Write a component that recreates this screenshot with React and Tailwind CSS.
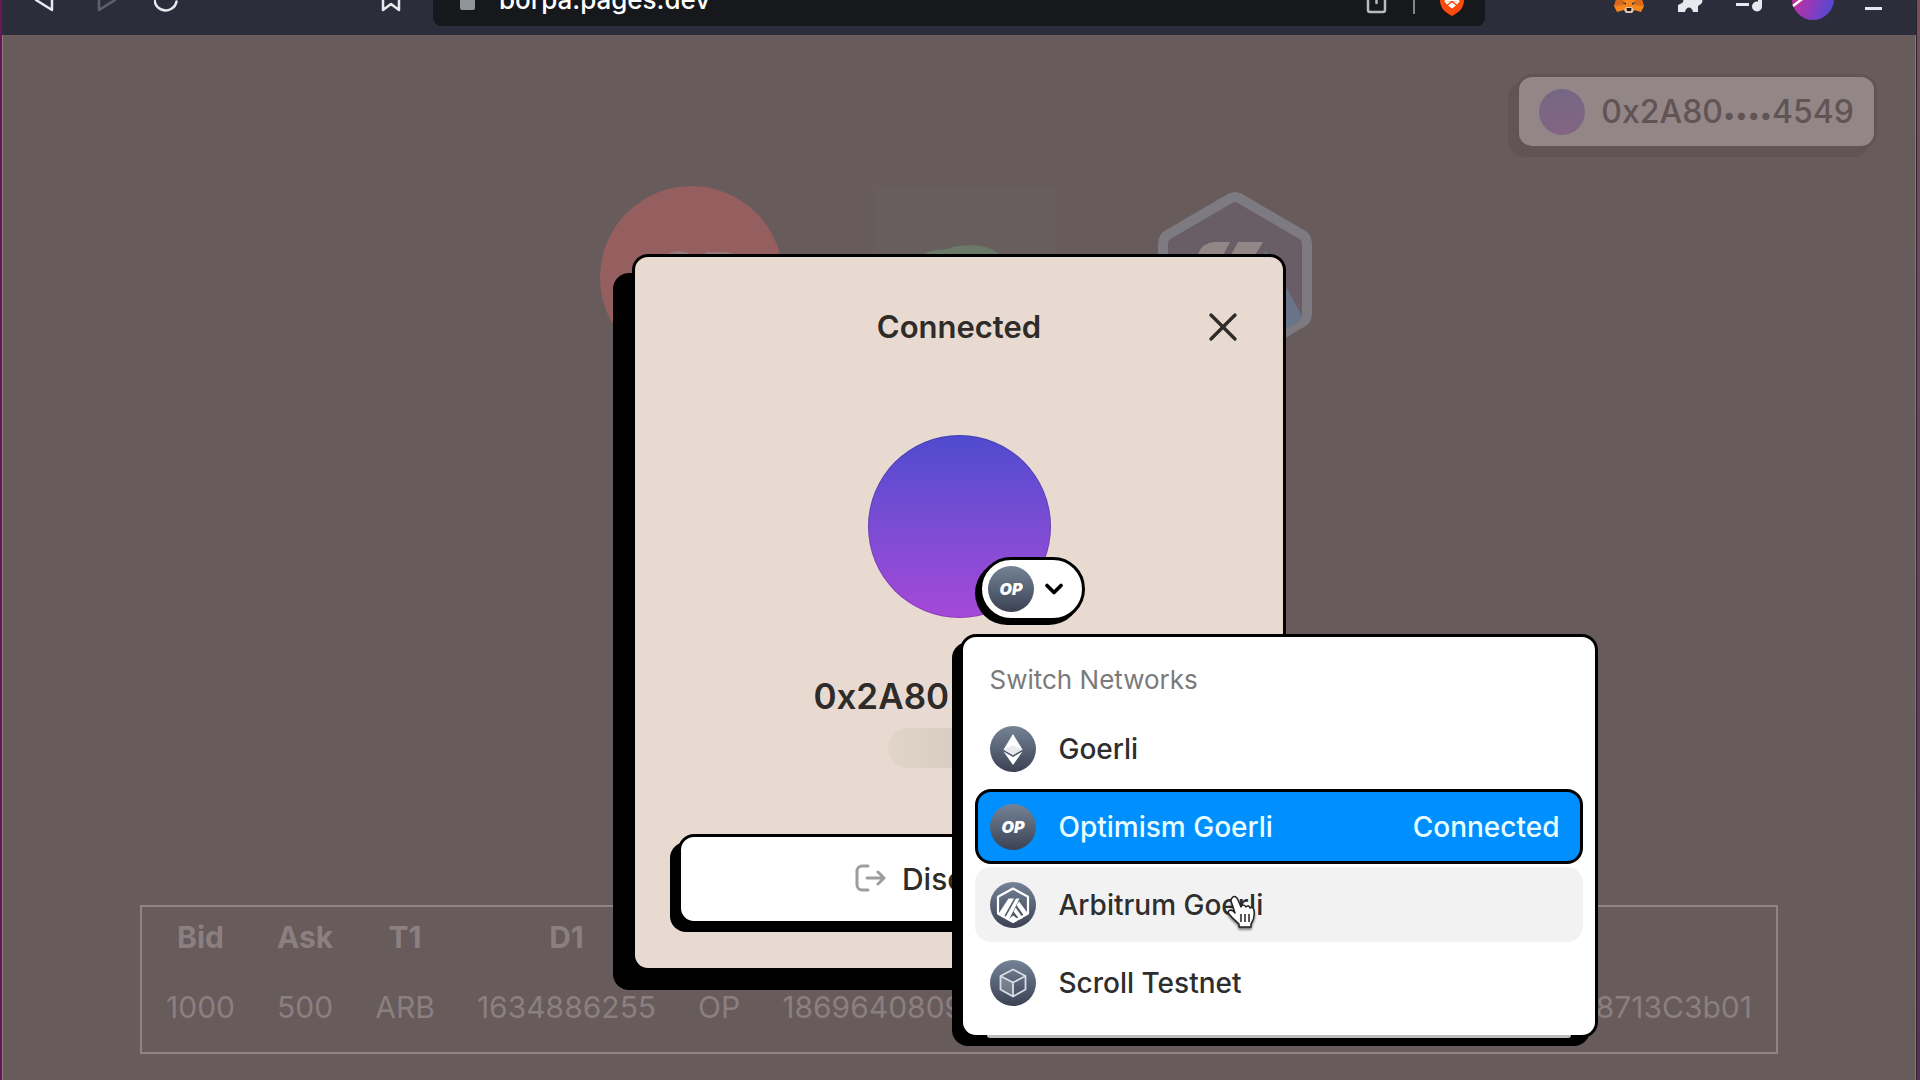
import React from 'react';
import { X, ChevronDown } from 'lucide-react';

const orders = [
  {
    bid: '1000',
    ask: '500',
    t1: 'ARB',
    d1: '1634886255',
    t2: 'OP',
    d2: '1869640809',
    address: '0x2A80b4f19d6ce07a35f81b124dc16a08713C3b01',
  },
];

const ChainBadge = ({ id, children }) => (
  <svg className="size-[46px] shrink-0" viewBox="0 0 46 46" aria-hidden="true">
    <defs>
      <linearGradient id={id} x1="0" y1="0" x2="0" y2="1">
        <stop offset="0" stopColor="#758396" />
        <stop offset="1" stopColor="#3b4254" />
      </linearGradient>
    </defs>
    <circle cx="23" cy="23" r="23" fill={`url(#${id})`} />
    {children}
  </svg>
);

const GoerliIcon = () => (
  <ChainBadge id="goerli">
    <path d="M23 8l9.500 15.500L23 29l-9.500-5.500z" fill="#fff" />
    <path d="M13.500 25.500L23 31l9.500-5.500L23 39z" fill="#fff" />
    <path d="M13.500 23.500L23 19.500l9.500 4L23 29z" fill="#e8eaf0" />
  </ChainBadge>
);

const OptimismIcon = ({ id }) => (
  <ChainBadge id={id}>
    <text
      x="23"
      y="29"
      textAnchor="middle"
      fill="#fff"
      className="font-['Inter'] text-[16px] font-black italic"
    >
      OP
    </text>
  </ChainBadge>
);

const ArbitrumIcon = () => (
  <ChainBadge id="arbitrum">
    <path d="M23 6.500L38 14.800V31.500L23 40L8 31.500V14.800z" fill="none" stroke="#fff" strokeWidth="2.200" strokeLinejoin="round" />
    <path d="M18.500 16.500H24L13.500 35.500L8 32.500z" fill="#fff" />
    <path d="M26 16.500H29.500L19 37.500L15 36z" fill="#fff" />
    <path d="M29 19.500L38 31.500L34.500 34.500L26.500 23z" fill="#fff" />
    <path d="M25.500 25.500L33 36L29.500 37.500L23.500 29.500z" fill="#fff" />
    <path d="M19 37L23 33.500L28 37L23 40z" fill="#fff" />
  </ChainBadge>
);

const ScrollIcon = () => (
  <ChainBadge id="scroll">
    <path d="M10.500 16L23 23V36.500L10.500 29.500z" fill="#fff" fillOpacity=".2" />
    <path
      d="M23 9.500L35.500 16V29.500L23 36.500L10.500 29.500V16zM10.500 16L23 22.500L35.500 16M23 22.500V36.500"
      fill="none"
      stroke="#d9dde6"
      strokeWidth="1.800"
      strokeLinejoin="round"
    />
  </ChainBadge>
);

const BrowserBar = () => (
  <header className="flex h-[35px] items-end overflow-hidden bg-[#2b2d3a]">
    {/* only the lower half of the toolbar is in view */}
    <div className="flex h-[70px] w-full shrink-0 items-center">
      <div className="flex flex-1 items-center">
        <button aria-label="Back" className="ml-[30px]">
          <svg className="size-6" viewBox="0 0 24 24" fill="none" stroke="#e8e9ee" strokeWidth="2.500" strokeLinejoin="round">
            <path d="M20 2V22L4 12z" />
          </svg>
        </button>
        <button aria-label="Forward" className="ml-[38px]">
          <svg className="size-6" viewBox="0 0 24 24" fill="none" stroke="#5f616c" strokeWidth="2.500" strokeLinejoin="round">
            <path d="M5 2V22L21 12z" />
          </svg>
        </button>
        <button aria-label="Reload" className="ml-9">
          <svg className="size-6" viewBox="0 0 24 24" fill="none" stroke="#e8e9ee" strokeWidth="2.500" strokeLinecap="round">
            <path d="M22.500 13.500A11 10.500 0 1 1 20 5" />
          </svg>
        </button>
        <button aria-label="Bookmark" className="ml-[201px]">
          <svg className="size-6" viewBox="0 0 24 24" fill="none" stroke="#e8e9ee" strokeWidth="2.500" strokeLinejoin="round">
            <path d="M4 1H20V22L12 16L4 22z" />
          </svg>
        </button>
        <div className="ml-[30px] flex h-[51px] flex-1 items-center rounded-lg bg-[#17181c] pl-[27px] pr-5">
          <svg className="h-[22px] w-[15px]" viewBox="0 0 15 22" aria-hidden="true">
            <path d="M3 9V5a4.500 4.500 0 0 1 9 0v4" fill="none" stroke="#8f9499" strokeWidth="2" />
            <rect y="8" width="15" height="13" rx="2" fill="#8f9499" />
          </svg>
          <span className="ml-6 flex-1 text-[26px] font-medium leading-8 text-white">borpa.pages.dev</span>
          <button aria-label="Share">
            <svg className="h-7 w-6" viewBox="0 0 24 28" fill="none" stroke="#b9bac0" strokeWidth="2.500" strokeLinecap="round">
              <path d="M8 7H5a2 2 0 0 0-2 2V24a2 2 0 0 0 2 2H18a2 2 0 0 0 2-2V9a2 2 0 0 0-2-2h-3M11.500 2V17" />
            </svg>
          </button>
          <span className="ml-6 h-7 w-[2px] bg-[#85868c]" />
          <button aria-label="Brave Shields" className="ml-6">
            <svg className="h-8 w-[26px]" viewBox="0 0 26 32">
              <path d="M5 2H21L26 9L25 17C24 24 22 27 13 32C4 27 2 24 1 17L0 9z" fill="#fb4a0b" />
              <path d="M5 9L13 7L21 9L19 15L21 18L14 17H12L5 18L7 15z" fill="#fff" />
              <path d="M12 17.500L8 20.500L5.500 17.500zM14 17.500L18 20.500L20.500 17.500zM13 18.500L17 21.500L13 24.500L9 21.500z" fill="#fff" />
            </svg>
          </button>
        </div>
      </div>
      <div className="ml-[129px] mr-[34px] flex items-center">
        <button aria-label="MetaMask">
          <svg className="h-7 w-[30px]" viewBox="0 0 30 28">
            <path d="M1 1L12 8H18L29 1L28 14L30 20L27 26L20 24L18 27H12L10 24L3 26L0 20L2 14z" fill="#f6851b" />
            <path d="M2 14L9 13L10 19L0 20zM28 14L21 13L20 19L30 20z" fill="#d9691c" />
            <path d="M10 24L12 21H18L20 24L18 27H12z" fill="#d8c3b4" />
            <path d="M12.500 22H17.500L17 25H13z" fill="#161616" />
            <path d="M8 16L12 17L12 19zM22 16L18 17L18 19z" fill="#233447" />
          </svg>
        </button>
        <button aria-label="Extensions" className="ml-8">
          <svg className="size-7" viewBox="0 0 28 28" fill="#e8e9ee">
            <path d="M6 5H11A4 4 0 0 1 18 5H23V11A4 4 0 0 1 25 18L22 20V26H17C16 20 10 20 9 26H2V19L6 17A3 3 0 0 0 6 12z" />
          </svg>
        </button>
        <button aria-label="Media controls" className="ml-8">
          <svg className="h-6 w-[27px]" viewBox="0 0 27 24" fill="#e8e9ee">
            <path d="M0 7H16V10H0zM0 15H13V18H0zM22 2H27V5H26V19H22z" />
            <circle cx="21" cy="18.500" r="5" />
          </svg>
        </button>
        <button aria-label="Profile" className="ml-[29px]">
          <svg className="size-[42px]" viewBox="0 0 42 42">
            <defs>
              <linearGradient id="profile" x1="0" y1="0.400" x2="1" y2="0.800">
                <stop offset="0.100" stopColor="#c32fa4" />
                <stop offset="1" stopColor="#4b4bd6" />
              </linearGradient>
            </defs>
            <circle cx="21" cy="20" r="21" fill="url(#profile)" />
            <path d="M1 27L14 17" stroke="#fff" strokeWidth="2.500" />
          </svg>
        </button>
        <button aria-label="Minimize" className="ml-[31px]">
          <svg className="h-6 w-[17px]" viewBox="0 0 17 24">
            <path d="M0 19H17V22H0z" fill="#e8e9ee" />
          </svg>
        </button>
      </div>
    </div>
  </header>
);

const TokenLogos = () => (
  <div className="mt-[37px] flex justify-center gap-[91px] pl-[13px]">
    <svg className="size-[183px]" viewBox="0 0 183 183" aria-hidden="true">
      <circle cx="91.500" cy="91.500" r="91.500" fill="#965f5f" />
      <text x="95" y="110" textAnchor="middle" fill="#94787a" className="font-['Inter'] text-[60px] font-black italic">OP</text>
    </svg>
    <svg className="size-[183px] bg-[#685e5e]" viewBox="0 0 183 183" aria-hidden="true">
      <path d="M50 69C56 62 68 65 76 62C88 58 110 58 120 65C124 67 127 71 128 73L130 120H44z" fill="#6a7a66" />
    </svg>
    <svg className="size-[183px]" viewBox="0 0 183 183" aria-hidden="true">
      <path
        d="M83 12Q87 10 91 12L153 48Q159 51 159 58V128Q159 134 153 137L91 173Q87 175 83 173L21 137Q15 134 15 128V58Q15 51 21 48z"
        fill="#695e66"
        stroke="#7d7a81"
        strokeWidth="10"
      />
      <path d="M118 65L154 130Q154 135 140 142L90 100z" fill="#6a7489" />
      <path d="M66 56H82L50 118H36L50 68Q54 57 66 56zM90 56H115L70 130H50z" fill="#938687" />
    </svg>
  </div>
);

const OrdersTable = () => (
  <div className="px-[137px]">
    <table className="w-full border-separate border-spacing-x-1 border-spacing-y-0 whitespace-nowrap border-2 border-[#8f8384] px-px pb-[9px] text-center text-[30px] leading-[36px] text-[#8b7f80]">
      <thead>
        <tr>
          <th className="px-[19px] pt-[12px] pb-[18px]">Bid</th>
          <th className="px-[19px] pt-[12px] pb-[18px]">Ask</th>
          <th className="px-[19px] pt-[12px] pb-[18px]">T1</th>
          <th className="px-[19px] pt-[12px] pb-[18px]">D1</th>
          <th className="px-[19px] pt-[12px] pb-[18px]">T2</th>
          <th className="px-[19px] pt-[12px] pb-[18px]">D2</th>
          <th className="w-full px-[19px] pt-[12px] pb-[18px]">Address</th>
        </tr>
      </thead>
      <tbody>
        {orders.map((order) => (
          <tr key={order.address}>
            <td className="px-[19px] pt-[16px] pb-[18px]">{order.bid}</td>
            <td className="px-[19px] pt-[16px] pb-[18px]">{order.ask}</td>
            <td className="px-[19px] pt-[16px] pb-[18px]">{order.t1}</td>
            <td className="px-[19px] pt-[16px] pb-[18px]">{order.d1}</td>
            <td className="px-[19px] pt-[16px] pb-[18px]">{order.t2}</td>
            <td className="px-[19px] pt-[16px] pb-[18px]">{order.d2}</td>
            <td className="px-[19px] pt-[16px] pb-[18px] text-right">{order.address}</td>
          </tr>
        ))}
      </tbody>
    </table>
  </div>
);

const Pointer = () => (
  <svg
    className="pointer-events-none absolute top-[28px] left-[251px] h-9 w-8 drop-shadow-[0_2px_1px_rgba(0,0,0,0.5)]"
    viewBox="0 0 32 36"
    aria-hidden="true"
  >
    <path
      d="M6 3C8 0 11 2 12 5L15 12C16 9 19 10 20 12C21 10 24 11 24 13C26 12 28 13 28 16C29 22 27 26 25 29V32H13V29C10 26 6 23 3 19C1 16 4 14 7 16L9 18L5 6C5 5 5 4 6 3z"
      fill="#fff"
      stroke="#222"
      strokeWidth="1.500"
      strokeLinejoin="round"
    />
    <path d="M15 19V27M19 19V27M23 19V27" stroke="#222" strokeWidth="1.500" />
  </svg>
);

const NetworkMenu = () => (
  <div className="absolute top-[199px] left-[92px] w-[638px] rounded-2xl border-[3px] border-black bg-white px-3 pt-[25px] pb-[15px] text-[28px] font-medium leading-9 text-[#2e2e2e] shadow-[-8px_8px_0_0_#000]">
    <h2 className="mb-[13px] px-[15px] text-[26px] font-normal text-[#7a7a7a]">Switch Networks</h2>
    <div className="flex flex-col gap-[3px]">
      <button className="flex h-[75px] items-center gap-[23px] rounded-2xl px-[15px]">
        <GoerliIcon />
        Goerli
      </button>
      <button className="flex h-[75px] items-center gap-[23px] rounded-2xl border-[3px] border-black bg-[#008fff] px-3 text-[#e9ffff]">
        <OptimismIcon id="optimism-row" />
        Optimism Goerli
        <span className="ml-auto pr-2">Connected</span>
      </button>
      <button className="relative flex h-[75px] items-center gap-[23px] rounded-2xl bg-[#f2f2f2] px-[15px]">
        <ArbitrumIcon />
        Arbitrum Goerli
        <Pointer />
      </button>
      <button className="flex h-[75px] items-center gap-[23px] rounded-2xl px-[15px]">
        <ScrollIcon />
        Scroll Testnet
      </button>
    </div>
    <div className="absolute inset-x-6 -bottom-[3px] h-[3px] rounded-b bg-[#bcbcbc]" />
  </div>
);

const AccountModal = () => (
  <div className="absolute inset-0 flex items-start justify-center pt-[219px]">
    <div
      role="dialog"
      aria-label="Connected"
      className="flex w-[654px] flex-col items-center rounded-2xl border-[3px] border-black bg-[#e8dad0] px-[43px] pt-[43px] pb-[44px] text-[#2e2b28] shadow-[-19px_19px_0_0_#000]"
    >
      <div className="relative flex h-[54px] w-full items-center justify-center">
        <h1 className="text-[31px] font-semibold leading-10">Connected</h1>
        <button aria-label="Close" className="absolute right-[-7px]">
          <X className="size-12" strokeWidth={1.7} />
        </button>
      </div>

      <div className="relative z-10 mt-[81px] size-[183px] rounded-full bg-linear-to-b from-[#4d4bcf] to-[#a548d8] shadow-[inset_0_0_0_1px_rgba(0,0,0,0.15)]">
        <button
          aria-label="Switch network"
          className="absolute top-[122px] left-[111px] flex h-16 w-[106px] items-center gap-[6px] rounded-full border-[3px] border-black bg-white pl-[6px] shadow-[-4px_4px_0_0_#000]"
        >
          <OptimismIcon id="optimism-current" />
          <ChevronDown className="size-7 text-black" strokeWidth={3.2} />
        </button>
        <NetworkMenu />
      </div>

      <p className="mt-[56px] text-[35px] font-semibold leading-[44px]">
        0x2A80<span className="text-[32px] leading-none">••••</span>4549
      </p>
      <div className="mt-[10px] h-10 w-[143px] rounded-full bg-linear-to-r from-[#e1d5ca] to-[#cfc3b7]" />

      <button className="mt-[66px] flex h-[90px] w-full items-center justify-center gap-4 rounded-2xl border-[3px] border-black bg-white text-[30px] font-medium shadow-[-8px_8px_0_0_#000]">
        <svg className="size-8" viewBox="0 0 32 32" fill="none" stroke="#9e9e9e" strokeWidth="3" strokeLinecap="round" strokeLinejoin="round" aria-hidden="true">
          <path d="M14 3H8a5 5 0 0 0-5 5V22a5 5 0 0 0 5 5h6M13 15H30M24 9L30 15L24 21" />
        </svg>
        Disconnect
      </button>
    </div>
  </div>
);

const App = () => {
  return (
    <div className="flex min-h-screen overflow-hidden font-['Inter',sans-serif]">
      <div className="w-[2px] bg-[#6b1457]" />
      <div className="flex min-w-0 flex-1 flex-col">
        <BrowserBar />
        <main className="relative flex flex-1 flex-col border-x border-[#85797a] bg-[#675b5c]">
          <div className="flex justify-end pt-[39px] pr-[38px]">
            <button className="flex h-[75px] items-center gap-4 rounded-2xl border-[3px] border-[#605455] bg-[#938687] px-5 text-[32px] font-medium leading-10 text-[#605455] shadow-[-8px_8px_0_0_#605455]">
              <span className="size-[46px] rounded-full bg-linear-to-b from-[#756784] to-[#836583]" />
              <span>
                0x2A80<span className="text-[23px] leading-none">••••</span>4549
              </span>
            </button>
          </div>
          <TokenLogos />
          <div className="mt-auto pb-[26px]">
            <OrdersTable />
          </div>
          <AccountModal />
        </main>
      </div>
      <div className="w-1 border-l border-[#2a2528] bg-linear-to-b from-[#75505f] to-[#5c2c5c]" />
    </div>
  );
};

export default App;
